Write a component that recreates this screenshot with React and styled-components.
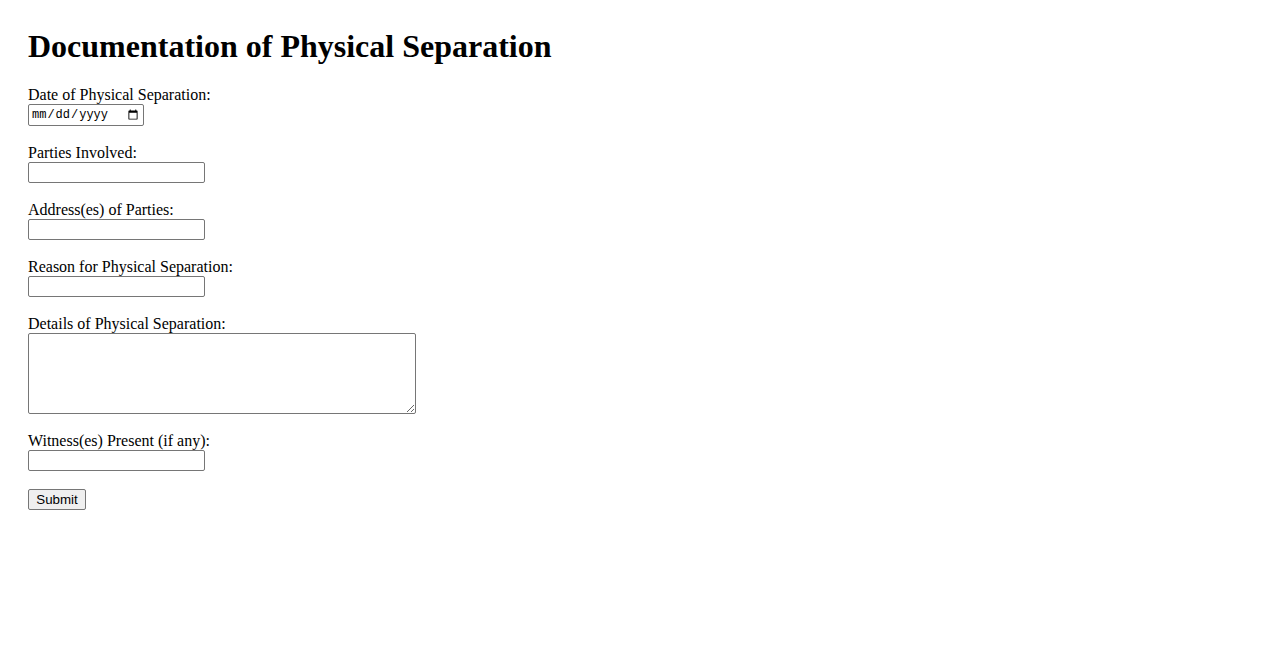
import React from "react";
import styled, { createGlobalStyle } from "styled-components";

const Global = createGlobalStyle`
  html, body { margin: 0; padding: 0; background: #fff; }
  body { font-family: "Liberation Serif", "Times New Roman", serif; color: #000; }
`;

const Page = styled.div`
  padding: 28px;
`;

const Title = styled.h1`
  margin: 0 0 21px 0;
  font-size: 32px;
  line-height: 37px;
  font-weight: bold;
`;

const Form = styled.form`
  display: flex;
  flex-direction: column;
  align-items: flex-start;
`;

const Field = styled.div`
  display: flex;
  flex-direction: column;
  align-items: flex-start;
  margin-bottom: 18px;
`;

const Label = styled.label`
  display: block;
  font-size: 16px;
  line-height: 18px;
  height: 18px;
`;

const TextInput = styled.input`
  box-sizing: border-box;
  width: 177px;
  height: 21px;
  margin: 0;
  padding: 1px 2px;
  border: 1px solid #767676;
  border-radius: 2px;
  background: #fff;
  font-family: "Liberation Sans", Arial, sans-serif;
  font-size: 13.33px;
`;

const DateInput = styled.input`
  box-sizing: border-box;
  width: 116px;
  height: 22px;
  margin: 0;
  padding: 1px 2px;
  border: 1px solid #767676;
  border-radius: 2px;
  background: #fff;
  font-family: "Liberation Mono", "Courier New", monospace;
  font-size: 12px;
  color: #000;
`;

const TextArea = styled.textarea`
  box-sizing: border-box;
  width: 388px;
  height: 81px;
  margin: 0;
  padding: 2px;
  border: 1px solid #767676;
  border-radius: 2px;
  font-family: "Liberation Mono", monospace;
  font-size: 13.33px;
`;

const Button = styled.button`
  box-sizing: border-box;
  height: 21px;
  width: 58px;
  margin: 0;
  padding: 1px 6px;
  border: 1px solid #767676;
  border-radius: 2px;
  background: #efefef;
  color: #000;
  font-family: "Liberation Sans", Arial, sans-serif;
  font-size: 13.33px;
  line-height: 17px;
`;

export default function App() {
  return (
    <>
      <Global />
      <Page>
        <Title>Documentation of Physical Separation</Title>
        <Form onSubmit={(e) => e.preventDefault()}>
          <Field>
            <Label htmlFor="date">Date of Physical Separation:</Label>
            <DateInput type="date" id="date" />
          </Field>
          <Field>
            <Label htmlFor="parties">Parties Involved:</Label>
            <TextInput type="text" id="parties" />
          </Field>
          <Field>
            <Label htmlFor="address">Address(es) of Parties:</Label>
            <TextInput type="text" id="address" />
          </Field>
          <Field>
            <Label htmlFor="reason">Reason for Physical Separation:</Label>
            <TextInput type="text" id="reason" />
          </Field>
          <Field>
            <Label htmlFor="details">Details of Physical Separation:</Label>
            <TextArea id="details" />
          </Field>
          <Field>
            <Label htmlFor="witness">Witness(es) Present (if any):</Label>
            <TextInput type="text" id="witness" />
          </Field>
          <Button type="submit">Submit</Button>
        </Form>
      </Page>
    </>
  );
}
